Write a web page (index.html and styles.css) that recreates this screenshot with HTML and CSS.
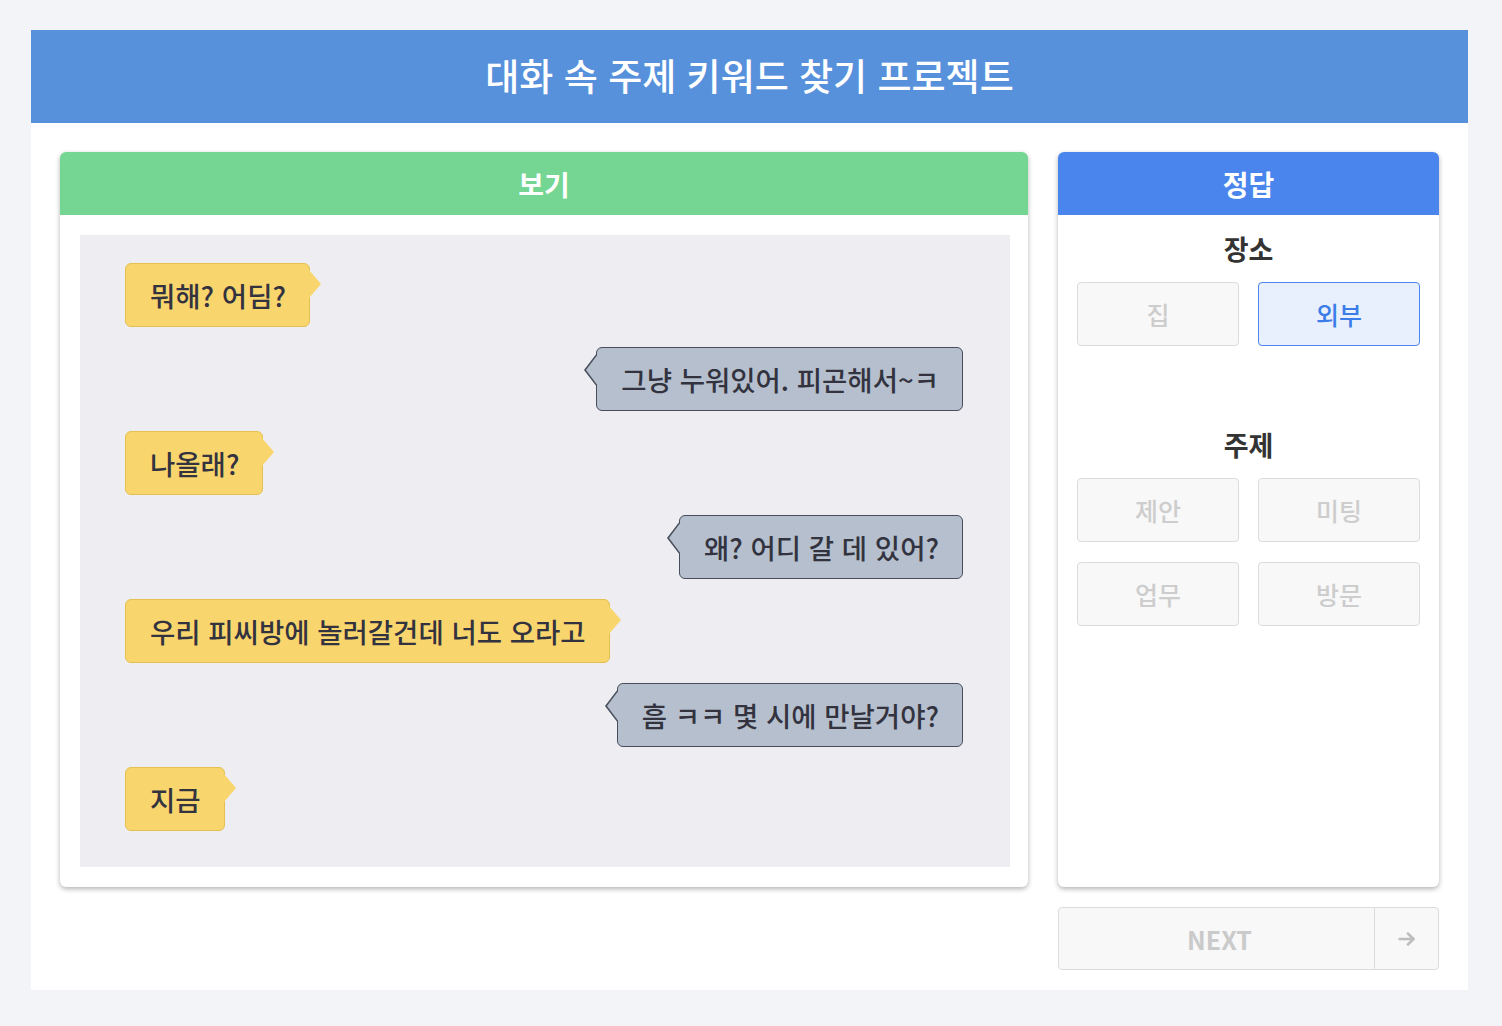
FILE: index.html
```html
<!DOCTYPE html>
<html lang="ko">
<head>
  <meta charset="UTF-8" />
  <meta name="viewport" content="width=device-width, initial-scale=1" />
  <title>대화 속 주제 키워드 찾기 프로젝트</title>
  <link rel="stylesheet" href="styles.css">
</head>
<body>
  <div class="app">
    <header class="topbar">대화 속 주제 키워드 찾기 프로젝트</header>

    <div class="content">
      <section class="panel view-panel">
        <div class="panel-head green">보기</div>
        <div class="panel-body">
          <div class="chat">
            <div class="msg left">뭐해? 어딤?</div>
            <div class="msg right">그냥 누워있어. 피곤해서~ㅋ</div>
            <div class="msg left">나올래?</div>
            <div class="msg right">왜? 어디 갈 데 있어?</div>
            <div class="msg left">우리 피씨방에 놀러갈건데 너도 오라고</div>
            <div class="msg right">흠 ㅋㅋ 몇 시에 만날거야?</div>
            <div class="msg left">지금</div>
          </div>
        </div>
      </section>

      <div class="side">
        <section class="panel answer-panel">
          <div class="panel-head blue">정답</div>
          <div class="answer-body">
            <div class="group place">
              <h2>장소</h2>
              <div class="options">
                <button class="opt">집</button>
                <button class="opt selected">외부</button>
              </div>
            </div>
            <div class="group">
              <h2>주제</h2>
              <div class="options">
                <button class="opt">제안</button>
                <button class="opt">미팅</button>
                <button class="opt">업무</button>
                <button class="opt">방문</button>
              </div>
            </div>
          </div>
        </section>

        <button class="next-btn" disabled>
          <span class="next-label">NEXT</span>
          <span class="next-arrow">
            <svg width="22" height="22" viewBox="0 0 24 24" fill="none" stroke="currentColor" stroke-width="2.8" stroke-linecap="round" stroke-linejoin="round">
              <path d="M4 12h15" />
              <path d="M13 6l6 6-6 6" />
            </svg>
          </span>
        </button>
      </div>
    </div>
  </div>
</body>
</html>
```

FILE: styles.css
```css
body {
  font-family: "Noto Sans CJK KR", "Noto Sans", sans-serif;
  background: #f3f4f7;
  color: #333;
  margin: 0;
  padding: 30px 34px 36px 31px;
}
.app {
  background: #fff;
}
.topbar {
  height: 93px;
  background: #5791dc;
  color: #fff;
  font-size: 37px;
  font-weight: 500;
  display: flex;
  align-items: center;
  justify-content: center;
  padding-bottom: 3px;
  box-sizing: border-box;
}
.content {
  display: grid;
  grid-template-columns: 968px 381px;
  gap: 30px;
  padding: 29px 29px 20px;
}
.panel {
  height: 735px;
  background: #fff;
  border-radius: 6px;
  box-shadow: 0 2px 5px rgba(0,0,0,0.3);
  overflow: hidden;
  display: flex;
  flex-direction: column;
  box-sizing: border-box;
}
.panel-head {
  height: 63px;
  flex-shrink: 0;
  display: flex;
  align-items: center;
  justify-content: center;
  color: #fff;
  font-size: 28px;
  font-weight: 700;
}
.panel-head.green { background: #75d593; }
.panel-head.blue { background: #4a85ee; }
.panel-body {
  flex: 1;
  padding: 20px 18px 20px 20px;
  display: flex;
}
.chat {
  flex: 1;
  background: #eeeef2;
  padding: 28px 47px 36px 45px;
  display: flex;
  flex-direction: column;
  gap: 20px;
}
.msg {
  position: relative;
  height: 64px;
  box-sizing: border-box;
  padding: 0 23px 0 24px;
  display: flex;
  align-items: center;
  font-size: 27.5px;
  font-weight: 500;
  color: #33333f;
  border-radius: 6px;
}
.msg.left {
  align-self: flex-start;
  background: #f9d56d;
  border: 1px solid #e4c04e;
}
.msg.left::after {
  content: "";
  position: absolute;
  right: -12px;
  top: 6px;
  border-top: 14px solid transparent;
  border-bottom: 14px solid transparent;
  border-left: 12px solid #f9d56d;
}
.msg.right {
  align-self: flex-end;
  background: #b5bfcd;
  border: 1px solid #474d5a;
}
.msg.right::before {
  content: "";
  position: absolute;
  left: -13px;
  top: 5px;
  border-top: 17px solid transparent;
  border-bottom: 17px solid transparent;
  border-right: 13px solid #474d5a;
}
.msg.right::after {
  content: "";
  position: absolute;
  left: -11px;
  top: 6px;
  border-top: 16px solid transparent;
  border-bottom: 16px solid transparent;
  border-right: 12px solid #b5bfcd;
}
.answer-body {
  padding: 16px 19px 0;
}
.group h2 {
  margin: 0 0 15px;
  height: 36px;
  line-height: 36px;
  text-align: center;
  font-size: 27px;
  font-weight: 700;
  color: #333;
}
.group.place {
  margin-bottom: 81px;
}
.options {
  display: grid;
  grid-template-columns: 1fr 1fr;
  gap: 20px 19px;
}
.opt {
  height: 64px;
  font-family: inherit;
  font-size: 25px;
  font-weight: 500;
  background: #f8f8f8;
  border: 1px solid #dcdcdc;
  border-radius: 4px;
  color: #cdcdcd;
  padding: 0;
}
.opt.selected {
  background: #e8f0fd;
  border-color: #4a85ee;
  color: #3b7de8;
}
.side {
  display: flex;
  flex-direction: column;
  gap: 20px;
}
.next-btn {
  height: 63px;
  display: flex;
  padding: 0;
  background: #f8f8f8;
  border: 1px solid #dcdcdc;
  border-radius: 4px;
  font-family: inherit;
}
.next-label {
  flex: 1;
  display: flex;
  align-items: center;
  justify-content: center;
  font-size: 25px;
  font-weight: 700;
  color: #cacaca;
  padding-left: 6px;
}
.next-arrow {
  width: 63px;
  border-left: 1px solid #dcdcdc;
  display: flex;
  align-items: center;
  justify-content: center;
  color: #bdbdbd;
}
```
